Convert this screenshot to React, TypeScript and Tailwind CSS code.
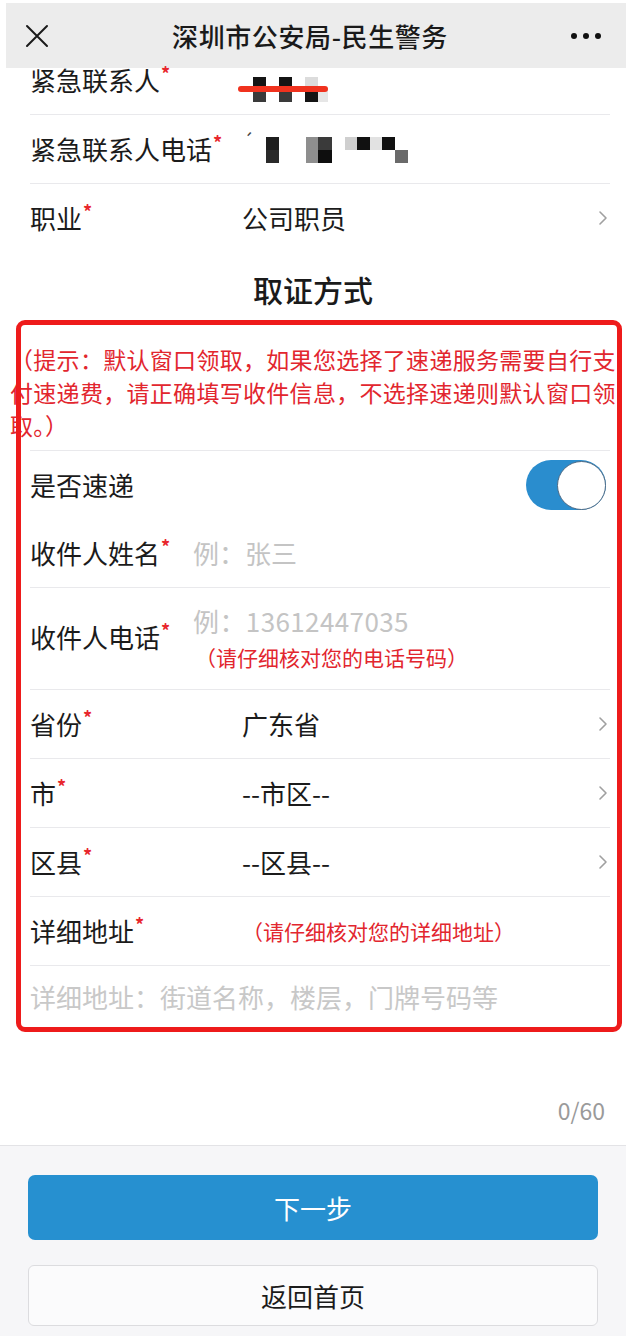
import React from 'react';

const FONT = { fontFamily: '"Noto Sans CJK SC", "Noto Sans", sans-serif' };

const Star: React.FC = () => (
  <span className="text-[#e8262c] text-[18px] font-bold leading-none relative -top-[7px] ml-[1px]">*</span>
);

const Chevron: React.FC = () => (
  <svg width="10" height="16" viewBox="0 0 10 16" className="shrink-0">
    <path d="M2 2 L8 8 L2 14" fill="none" stroke="#a0a0a0" strokeWidth="1.6" strokeLinecap="round" strokeLinejoin="round" />
  </svg>
);

const Divider: React.FC = () => <div className="ml-[30px] mr-[16px] h-px bg-[#e9e9ec]" />;

const Cell: React.FC<{ c: string; w?: string; h?: string }> = ({ c, w = 'w-[13px]', h = 'h-[13px]' }) => (
  <div className={`${w} ${h} ${c}`} />
);

const SelectRow: React.FC<{ label: string; value: string }> = ({ label, value }) => (
  <div className="h-[68px] flex items-center pl-[30px] pr-[18px]">
    <div className="w-[212px] shrink-0 flex items-center text-[#1b1b1b]">
      {label}
      <Star />
    </div>
    <div className="flex-1 text-[#1b1b1b]">{value}</div>
    <Chevron />
  </div>
);

export default function App() {
  return (
    <div className="relative w-[626px] h-[1336px] bg-white overflow-hidden text-[26px] leading-[26px]" style={FONT}>
      {/* top bar */}
      <div className="h-[68px] pt-[3px] pl-[6px] bg-white">
        <div className="h-[65px] bg-[#ececec] flex items-center px-[19px]">
          <svg width="24" height="24" viewBox="0 0 24 24" className="shrink-0">
            <path d="M2 2 L22 22 M22 2 L2 22" stroke="#1a1a1a" strokeWidth="2" strokeLinecap="round" />
          </svg>
          <div className="flex-1 text-center text-[26px] font-medium text-[#1a1a1a] tracking-[0.6px]">深圳市公安局-民生警务</div>
          <div className="flex gap-[6px] pr-[6px]">
            <span className="w-[6px] h-[6px] rounded-full bg-[#111]" />
            <span className="w-[6px] h-[6px] rounded-full bg-[#111]" />
            <span className="w-[6px] h-[6px] rounded-full bg-[#111]" />
          </div>
        </div>
      </div>

      {/* emergency contact */}
      <div className="h-[47px] flex items-start pl-[30px] -mt-[1px]">
        <div className="w-[223px] shrink-0 flex items-center text-[#1b1b1b]">
          紧急联系人
          <Star />
        </div>
        <div className="relative flex gap-[13px] pt-[10px]">
          <div className="flex flex-col">
            <Cell c="bg-[#141414]" h="h-[12px]" />
            <Cell c="bg-[#3a3a3a]" />
          </div>
          <div className="flex flex-col">
            <Cell c="bg-[#141414]" h="h-[12px]" />
            <Cell c="bg-[#3a3a3a]" />
          </div>
          <div className="flex -ml-[0px]">
            <div className="flex flex-col">
              <Cell c="bg-[#dcdcdc]" h="h-[12px]" />
              <Cell c="bg-[#141414]" />
            </div>
            <div className="flex flex-col pt-[12px]">
              <Cell c="bg-[#e6e6e6]" w="w-[10px]" />
            </div>
          </div>
          <div className="absolute -left-[15px] top-[19px] w-[90px] h-[6px] rounded-full bg-[#f0321e]" />
        </div>
      </div>
      <Divider />

      <div className="h-[68px] flex items-center pl-[30px]">
        <div className="w-[213px] shrink-0 flex items-center text-[#1b1b1b]">
          紧急联系人电话
          <Star />
        </div>
        <div className="flex items-start pt-[2px]">
          <span className="text-[18px] leading-[18px] text-[#444] -mt-[6px] w-[23px]">´</span>
          <div className="flex flex-col">
            <Cell c="bg-[#1e1e1e]" />
            <Cell c="bg-[#2a2a2a]" />
          </div>
          <div className="w-[27px]" />
          <Cell c="bg-[#8e8e8e]" w="w-[12px]" h="h-[26px]" />
          <div className="flex flex-col">
            <Cell c="bg-[#3a3a3a]" w="w-[14px]" />
            <Cell c="bg-[#0e0e0e]" w="w-[14px]" />
          </div>
          <div className="w-[13px]" />
          <Cell c="bg-[#cfcfcf]" w="w-[12px]" />
          <Cell c="bg-[#111]" />
          <Cell c="bg-[#e2e2e2]" w="w-[12px]" />
          <Cell c="bg-[#111]" />
          <div className="flex flex-col pt-[13px]">
            <Cell c="bg-[#6a6a6a]" />
          </div>
        </div>
      </div>
      <Divider />

      <SelectRow label="职业" value="公司职员" />

      {/* section title */}
      <div className="h-[91px] pt-[19px] text-center text-[30px] leading-[36px] font-medium text-[#1a1a1a]">取证方式</div>

      {/* hint */}
      <div className="ml-[10px] w-[606px] overflow-hidden whitespace-nowrap text-[23px] leading-[33px] text-[#e2262e] pb-[8px] tracking-[0.3px]">
        <div>（提示：默认窗口领取，如果您选择了速递服务需要自行支</div>
        <div>付速递费，请正确填写收件信息，不选择速递则默认窗口领</div>
        <div>取。）</div>
      </div>
      <Divider />

      <div className="h-[68px] flex items-center pl-[30px] pr-[20px] justify-between">
        <div className="text-[#1b1b1b]">是否速递</div>
        <div className="w-[80px] h-[50px] rounded-full bg-[#2a8dce] flex items-center justify-end">
          <div className="w-[49px] h-[49px] rounded-full bg-white border border-[#4d6a85]" />
        </div>
      </div>

      <div className="h-[68px] flex items-center pl-[30px]">
        <div className="w-[163px] shrink-0 flex items-center text-[#1b1b1b]">
          收件人姓名
          <Star />
        </div>
        <div className="text-[#c4c4c4]">例：张三</div>
      </div>
      <Divider />

      <div className="h-[101px] flex items-center pl-[30px]">
        <div className="w-[163px] shrink-0 flex items-center text-[#1b1b1b] mt-[-4px]">
          收件人电话
          <Star />
        </div>
        <div className="flex flex-col">
          <div className="text-[#c4c4c4] leading-[30px] mt-[-2px] tracking-[0.4px]">例：13612447035</div>
          <div className="text-[21px] leading-[26px] text-[#e2262e] ml-[2px] mt-[8px]">（请仔细核对您的电话号码）</div>
        </div>
      </div>
      <Divider />

      <SelectRow label="省份" value="广东省" />
      <Divider />
      <SelectRow label="市" value="--市区--" />
      <Divider />
      <SelectRow label="区县" value="--区县--" />
      <Divider />

      <div className="h-[68px] flex items-center pl-[30px]">
        <div className="w-[212px] shrink-0 flex items-center text-[#1b1b1b]">
          详细地址
          <Star />
        </div>
        <div className="text-[21px] text-[#e2262e]">（请仔细核对您的详细地址）</div>
      </div>
      <Divider />

      {/* textarea */}
      <div className="h-[179px] flex flex-col pl-[30px] pr-[21px] pt-[18px]">
        <div className="text-[#c8c8c8]">详细地址：街道名称，楼层，门牌号码等</div>
        <div className="flex-1" />
        <div className="text-right text-[23px] text-[#9a9a9a] pb-[22px]">0/60</div>
      </div>

      {/* footer */}
      <div className="border-t border-[#e3e3e6] bg-[#f6f6f8] h-[191px] px-[28px] pt-[29px] flex flex-col gap-[25px]">
        <div className="h-[65px] rounded-[7px] bg-[#2690d0] flex items-center justify-center text-white text-[26px]">下一步</div>
        <div className="h-[61px] rounded-[6px] border border-[#dcdcdf] bg-[#fbfbfc] flex items-center justify-center text-[#1b1b1b] text-[26px]">返回首页</div>
      </div>

      {/* red annotation box */}
      <div className="absolute left-[16px] top-[320px] w-[606px] h-[712px] border-[5px] border-[#ee1b1b] rounded-[9px] pointer-events-none" />
    </div>
  );
}
